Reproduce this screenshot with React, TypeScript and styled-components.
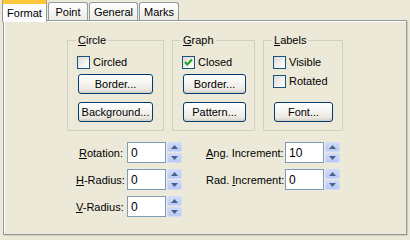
import React from "react";
import styled, { createGlobalStyle } from "styled-components";

const Global = createGlobalStyle`
  html, body {
    margin: 0;
    padding: 0;
    background: #ece9d8;
  }
  body {
    font-family: "Liberation Sans", Arial, sans-serif;
    font-size: 11px;
    color: #000;
  }
`;

const Dialog = styled.div`
  width: 410px;
  height: 239px;
  overflow: hidden;
  background: #ece9d8;
`;

const TabStrip = styled.div`
  display: flex;
  align-items: flex-end;
  gap: 1px;
  height: 20px;
  padding-left: 2px;
`;

const Tab = styled.div<{ $w: number; $active?: boolean }>`
  position: relative;
  z-index: ${(p) => (p.$active ? 2 : 1)};
  box-sizing: border-box;
  width: ${(p) => p.$w}px;
  height: ${(p) => (p.$active ? 22 : 18)}px;
  margin-bottom: ${(p) => (p.$active ? -2 : 0)}px;
  display: flex;
  justify-content: center;
  padding-top: ${(p) => (p.$active ? 4 : 3)}px;
  border: 1px solid #919b9c;
  border-bottom: none;
  border-top: ${(p) => (p.$active ? "3px solid #ffc73c" : "1px solid #919b9c")};
  border-radius: 3px 3px 0 0;
  background: ${(p) =>
    p.$active ? "#fcfcfe" : "linear-gradient(#ffffff, #f3f3ef 60%, #ecebe6)"};
  box-shadow: ${(p) => (p.$active ? "inset 0 1px 0 #ffc73c, 0 -1px 0 #e68b2c" : "none")};
  line-height: 13px;
  white-space: nowrap;
`;

const Panel = styled.div`
  box-sizing: border-box;
  width: 404px;
  height: 215px;
  margin-left: 3px;
  border: 1px solid #919b9c;
  box-shadow: inset 1px 1px 0 #fff, inset 0 1px 0 #fff, 1px 1px 0 #d0cebf;
  background: #ece9d8;
  display: flex;
  flex-direction: column;
`;

const GroupRow = styled.div`
  display: flex;
  gap: 8px;
  margin: 13px 0 0 63px;
`;

const Group = styled.fieldset<{ $w: number }>`
  box-sizing: border-box;
  width: ${(p) => p.$w}px;
  margin: 0;
  padding: 0;
  border: 1px solid #d0d0bf;
  border-radius: 0;
  min-width: 0;
`;

const Legend = styled.legend`
  margin-left: 8px;
  padding: 0 2px;
  line-height: 13px;
  color: #000;
`;

const GroupBody = styled.div`
  display: grid;
  grid-template-rows: 18px 28px 20px;
  align-items: start;
  padding: 9px 0 8px 9px;
`;

const Key = styled.span`
  text-decoration: underline;
`;

const CheckRow = styled.label<{ $nudge?: number }>`
  display: flex;
  align-items: center;
  gap: 3px;
  height: 13px;
  margin-top: ${(p) => p.$nudge ?? 0}px;
  line-height: 13px;
`;

const Box = styled.span`
  box-sizing: border-box;
  width: 13px;
  height: 13px;
  border: 1px solid #1c5180;
  background: linear-gradient(135deg, #dcdbd5, #f6f6f3 70%, #ffffff);
  display: flex;
  align-items: center;
  justify-content: center;
`;

const Button = styled.button<{ $w: number; $row?: number }>`
  box-sizing: border-box;
  width: ${(p) => p.$w}px;
  height: 20px;
  margin-left: 1px;
  grid-row: ${(p) => p.$row ?? "auto"};
  padding: 0;
  border: 1px solid #003c74;
  border-radius: 3px;
  background: linear-gradient(#ffffff, #f5f4f0 45%, #ebe9e1 80%, #d6d0c5);
  box-shadow: inset 0 -1px 0 #d6d0c5;
  font-family: "Liberation Sans", Arial, sans-serif;
  font-size: 11px;
  color: #000;
  line-height: 13px;
`;

const SpinArea = styled.div`
  display: flex;
  gap: 24px;
  margin: 11px 0 0 72px;
`;

const SpinColumn = styled.div`
  display: flex;
  flex-direction: column;
  gap: 6px;
`;

const SpinRow = styled.div`
  display: flex;
  align-items: center;
  height: 21px;
`;

const FieldLabel = styled.span<{ $w: number }>`
  width: ${(p) => p.$w}px;
  margin-right: 4px;
  text-align: right;
  white-space: nowrap;
`;

const Field = styled.div`
  box-sizing: border-box;
  width: 39px;
  height: 21px;
  border: 1px solid #7f9db9;
  background: #fff;
  padding-left: 3px;
  display: flex;
  align-items: center;
  font-size: 12px;
`;

const Spinner = styled.div`
  display: flex;
  flex-direction: column;
  gap: 1px;
  width: 15px;
  height: 21px;
  margin-left: 1px;
`;

const SpinHalf = styled.div`
  flex: 1;
  box-sizing: border-box;
  border: 1px solid #d2dcfa;
  border-radius: 2px;
  background: linear-gradient(#cfdbfb, #b7c9f6);
  display: flex;
  align-items: center;
  justify-content: center;
`;

const Check = () => (
  <svg width="9" height="9" viewBox="0 0 9 9">
    <path d="M1 4 L3.3 6.5 L8 1.5" fill="none" stroke="#21a121" strokeWidth="2" />
  </svg>
);

const Arrow = ({ up }: { up?: boolean }) => (
  <svg width="7" height="4" viewBox="0 0 7 4">
    <polygon points={up ? "3.5,0 7,4 0,4" : "0,0 7,0 3.5,4"} fill="#4d6185" />
  </svg>
);

const CheckBox = ({ checked, children, nudge }: { checked?: boolean; children: React.ReactNode; nudge?: number }) => (
  <CheckRow $nudge={nudge}>
    <Box>{checked && <Check />}</Box>
    <span>{children}</span>
  </CheckRow>
);

const Spin = ({ label, value, w }: { label: React.ReactNode; value: string; w: number }) => (
  <SpinRow>
    <FieldLabel $w={w}>{label}</FieldLabel>
    <Field>{value}</Field>
    <Spinner>
      <SpinHalf><Arrow up /></SpinHalf>
      <SpinHalf><Arrow /></SpinHalf>
    </Spinner>
  </SpinRow>
);

export default function App() {
  return (
    <Dialog>
      <Global />
      <TabStrip>
        <Tab $w={45} $active>Format</Tab>
        <Tab $w={40}>Point</Tab>
        <Tab $w={49}>General</Tab>
        <Tab $w={40}>Marks</Tab>
      </TabStrip>
      <Panel>
        <GroupRow>
          <Group $w={97}>
            <Legend><Key>C</Key>ircle</Legend>
            <GroupBody>
              <CheckBox>Circled</CheckBox>
              <Button $w={75}>Border...</Button>
              <Button $w={75}>Background...</Button>
            </GroupBody>
          </Group>
          <Group $w={83}>
            <Legend><Key>G</Key>raph</Legend>
            <GroupBody>
              <CheckBox checked>Closed</CheckBox>
              <Button $w={63}>Border...</Button>
              <Button $w={63}>Pattern...</Button>
            </GroupBody>
          </Group>
          <Group $w={80}>
            <Legend><Key>L</Key>abels</Legend>
            <GroupBody>
              <CheckBox>Visible</CheckBox>
              <CheckBox nudge={1}>Rotated</CheckBox>
              <Button $w={59} $row={3}>Font...</Button>
            </GroupBody>
          </Group>
        </GroupRow>
        <SpinArea>
          <SpinColumn>
            <Spin w={47} value="0" label={<><Key>R</Key>otation:</>} />
            <Spin w={47} value="0" label={<><Key>H</Key>-Radius:</>} />
            <Spin w={47} value="0" label={<><Key>V</Key>-Radius:</>} />
          </SpinColumn>
          <SpinColumn>
            <Spin w={75} value="10" label={<><Key>A</Key>ng. Increment:</>} />
            <Spin w={75} value="0" label={<>Rad. <Key>I</Key>ncrement:</>} />
          </SpinColumn>
        </SpinArea>
      </Panel>
    </Dialog>
  );
}
